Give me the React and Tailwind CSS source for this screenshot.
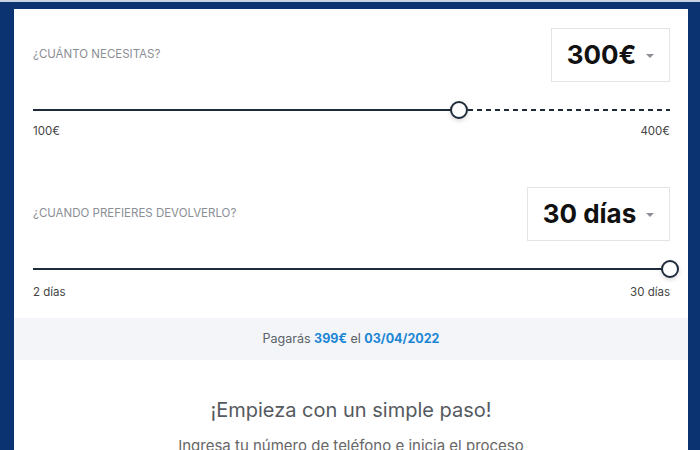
import { useState } from "react";

const font = { fontFamily: "Inter, 'Noto Sans', sans-serif" };

// simple range track with a draggable-looking knob
function Range({ pct, dashedRest }) {
  return (
    <div className="relative h-[20px]">
      <div
        className="absolute left-0 top-[9px] h-[2px] bg-[#1f2a3b]"
        style={{ width: `${pct}%` }}
      />
      {dashedRest && (
        <div
          className="absolute right-0 top-[9px] h-[2px] bg-[repeating-linear-gradient(to_right,#1f2a3b_0_5px,transparent_5px_9px)]"
          style={{ left: `${pct}%` }}
        />
      )}
      <div
        className="absolute top-[1px] h-[18px] w-[18px] -translate-x-1/2 rounded-full border-2 border-[#1f2a3b] bg-white shadow-[0_2px_4px_rgba(0,0,0,0.15)]"
        style={{ left: `${pct}%` }}
      />
    </div>
  );
}

function Picker({ value, width }) {
  return (
    <div
      className={`flex h-[54px] items-center justify-center gap-[10px] border border-[#e2e4e8] bg-white ${width}`}
    >
      <span className="text-[26px] font-bold leading-none text-[#111]">
        {value}
      </span>
      <span className="mt-[2px] h-0 w-0 border-x-[4px] border-t-[4px] border-x-transparent border-t-[#8c8f95]" />
    </div>
  );
}

export default function App() {
  const [amount] = useState(300);
  const [days] = useState(30);

  return (
    <div
      className="h-[450px] w-[700px] overflow-hidden border-t-2 border-[#c8d2e2] bg-[#0b3372] pl-[14px] pr-[12px] pt-[7px]"
      style={font}
    >
      <div className="h-full bg-white">
        {/* amount */}
        <div className="pl-[19px] pr-[18px] pt-[19px]">
          <div className="flex items-center justify-between">
            <span className="text-[11.5px] text-[#8a8e95]">
              ¿CUÁNTO NECESITAS?
            </span>
            <Picker value={`${amount}€`} width="w-[119px]" />
          </div>
          <div className="mt-[18px]">
            <Range pct={66.9} dashedRest />
          </div>
          <div className="mt-[4px] flex justify-between text-[11.5px] leading-[14px] text-[#444]">
            <span>100€</span>
            <span>400€</span>
          </div>

          {/* term */}
          <div className="mt-[49px] flex items-center justify-between">
            <span className="text-[11.5px] text-[#8a8e95]">
              ¿CUANDO PREFIERES DEVOLVERLO?
            </span>
            <Picker value={`${days} días`} width="w-[143px]" />
          </div>
          <div className="mt-[18px]">
            <Range pct={100} />
          </div>
          <div className="mt-[6px] flex justify-between text-[11.5px] leading-[14px] text-[#444]">
            <span>2 días</span>
            <span>30 días</span>
          </div>
        </div>

        <div className="mt-[19px] flex h-[42px] items-center justify-center bg-[#f3f5f9] text-[12.5px] text-[#5a5f66]">
          Pagarás&nbsp;<b className="font-bold text-[#1a86d4]">399€</b>&nbsp;el&nbsp;
          <b className="font-bold text-[#1a86d4]">03/04/2022</b>
        </div>

        <div className="text-center">
          <h2 className="mt-[36px] text-[20px] leading-[28px] text-[#555a60]">
            ¡Empieza con un simple paso!
          </h2>
          <p className="mt-[12px] text-[15px] leading-[20px] text-[#666]">
            Ingresa tu número de teléfono e inicia el proceso
          </p>
        </div>
      </div>
    </div>
  );
}
